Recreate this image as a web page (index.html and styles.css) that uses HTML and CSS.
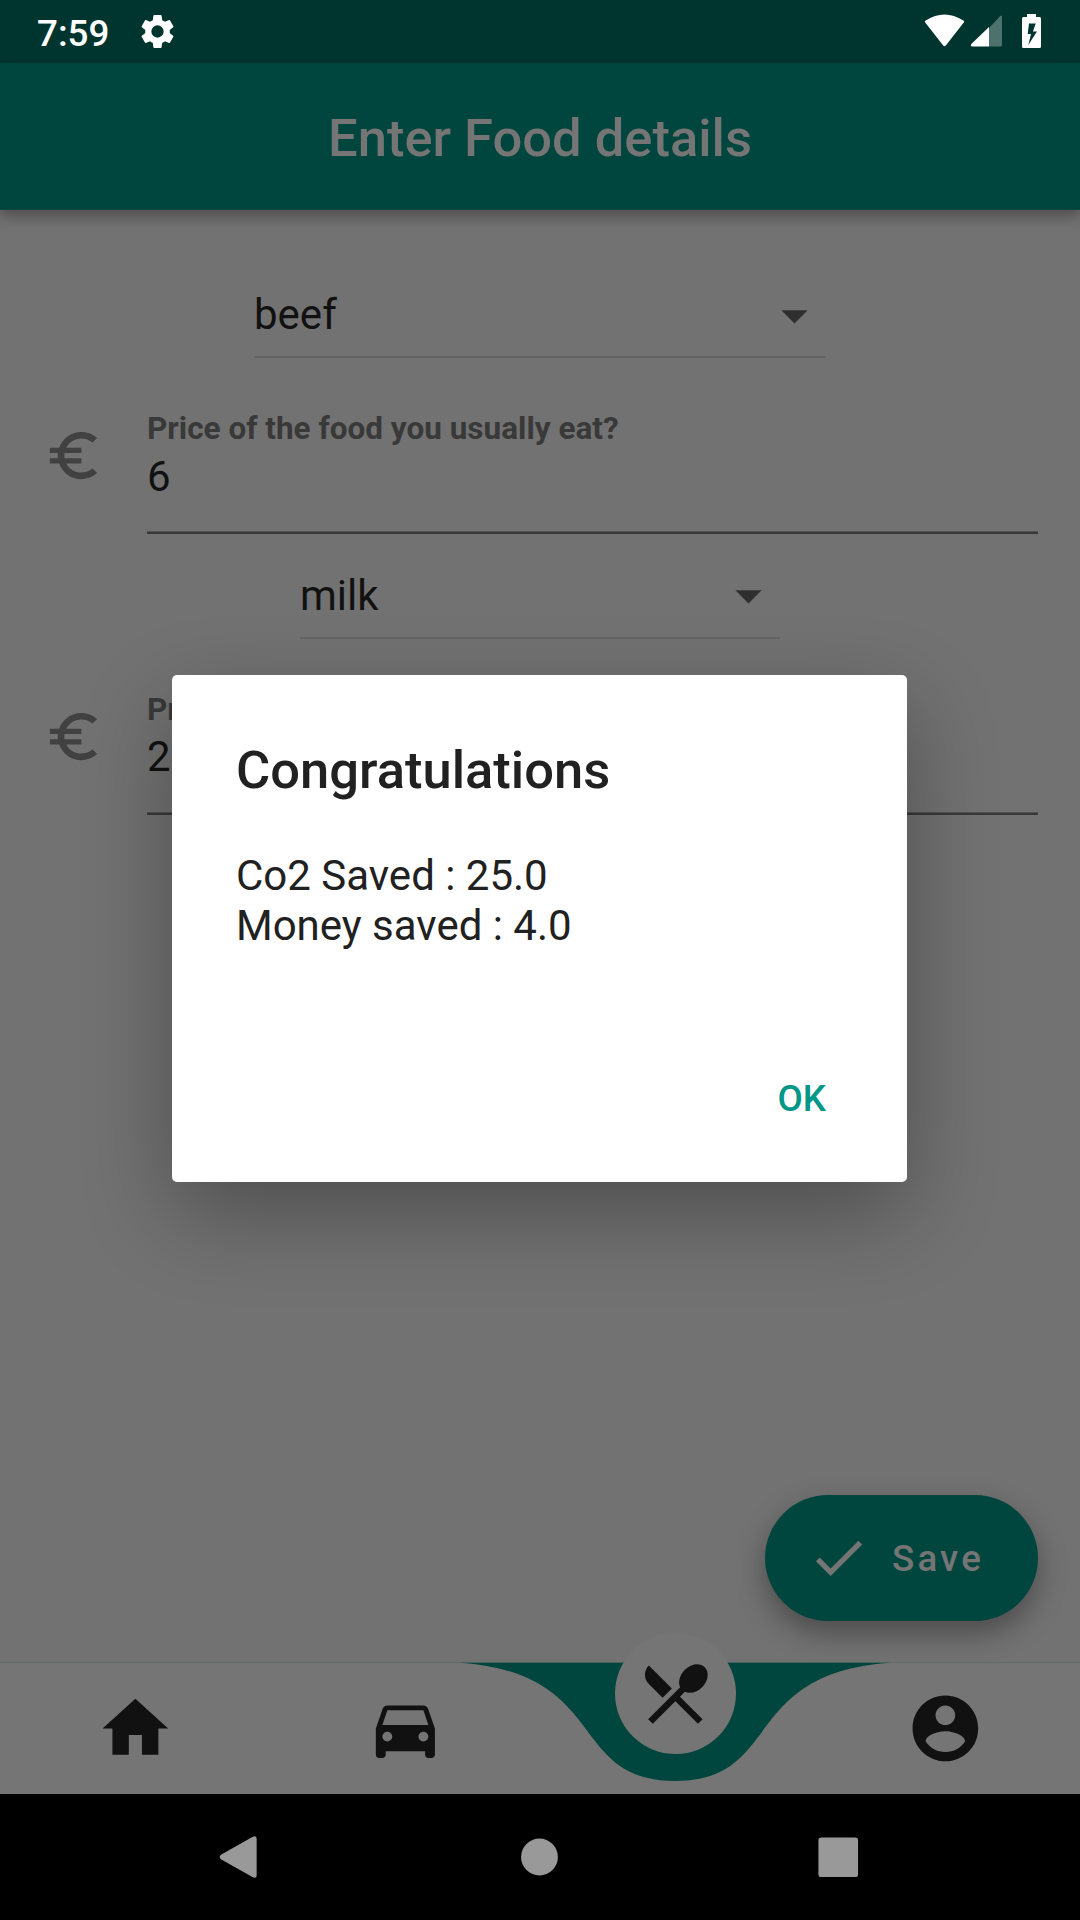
FILE: index.html
```html
<!DOCTYPE html>
<html lang="en">
<head>
<meta charset="utf-8">
<title>Enter Food details</title>
<link rel="stylesheet" href="styles.css">
</head>
<body>
<div class="screen">
  <header class="status">
    <span class="clock">7:59</span>
    <svg class="gear" viewBox="0 0 24 24"><path fill-rule="evenodd" d="M19.14 12.94c.04-.3.06-.61.06-.94s-.02-.64-.07-.94l2.03-1.58c.18-.14.23-.41.12-.61l-1.92-3.32c-.12-.22-.37-.29-.59-.22l-2.39.96c-.5-.38-1.03-.7-1.62-.94L14.4 2.81c-.04-.24-.24-.41-.48-.41h-3.84c-.24 0-.43.17-.47.41l-.36 2.54c-.59.24-1.13.57-1.62.94l-2.39-.96c-.22-.08-.47 0-.59.22L2.74 8.87c-.12.21-.08.47.12.61l2.03 1.58c-.05.3-.09.63-.09.94s.02.64.07.94l-2.03 1.58c-.18.14-.23.41-.12.61l1.92 3.32c.12.22.37.29.59.22l2.39-.96c.5.38 1.03.7 1.62.94l.36 2.54c.05.24.24.41.48.41h3.84c.24 0 .44-.17.47-.41l.36-2.54c.59-.24 1.13-.56 1.62-.94l2.39.96c.22.08.47 0 .59-.22l1.92-3.32c.12-.22.07-.47-.12-.61l-2.01-1.58zM12 15.6A3.6 3.6 0 1 1 12 8.4A3.6 3.6 0 0 1 12 15.6z"/></svg>
    <svg class="indicators" viewBox="0 0 120 36">
      <path d="M1.2 8.6Q.1 7.4 1.6 6.4Q20.5 -5.6 39.4 6.4Q40.9 7.4 39.8 8.6L22 31.3Q20.5 33 19 31.3Z"/>
      <path class="dim" d="M65 14V32.5H76.5Q78 32.5 78 31V3Q78 .5 76 2.2Z"/>
      <path d="M65 13V32.5H48.5Q46 32.3 47.3 30Z"/>
      <path fill-rule="evenodd" d="M103 0h9v3h3.5Q117 3 117 4.5V32.5Q117 34 115.5 34H99.5Q98 34 98 32.5V4.5Q98 3 99.5 3H103ZM105 9.5L103.7 20H107L104.3 31L113 17.5H109L111.7 9.5Z"/>
    </svg>
  </header>

  <div class="appbar"><h1>Enter Food details</h1></div>

  <main class="form">
    <section class="group">
      <div class="dropdown">
        <span>beef</span>
        <svg class="arrow" viewBox="0 0 24 24"><path d="M7 10l5 5 5-5z"/></svg>
      </div>
      <div class="field">
        <svg class="euro" viewBox="0 0 24 24"><path d="M15 18.5c-2.51 0-4.68-1.42-5.76-3.5H15v-2H8.58c-.05-.33-.08-.66-.08-1s.03-.67.08-1H15V9H9.24C10.32 6.92 12.5 5.5 15 5.5c1.61 0 3.09.59 4.23 1.57L21 5.3C19.41 3.87 17.3 3 15 3c-3.92 0-7.24 2.51-8.48 6H3v2h3.06c-.04.33-.06.66-.06 1s.02.67.06 1H3v2h3.52c1.24 3.49 4.56 6 8.48 6 2.31 0 4.41-.87 6-2.3l-1.78-1.77c-1.13.98-2.6 1.57-4.22 1.57z"/></svg>
        <div class="entry">
          <label>Price of the food you usually eat?</label>
          <div class="value">6</div>
        </div>
      </div>
    </section>
    <section class="group">
      <div class="dropdown narrow">
        <span>milk</span>
        <svg class="arrow" viewBox="0 0 24 24"><path d="M7 10l5 5 5-5z"/></svg>
      </div>
      <div class="field">
        <svg class="euro" viewBox="0 0 24 24"><path d="M15 18.5c-2.51 0-4.68-1.42-5.76-3.5H15v-2H8.58c-.05-.33-.08-.66-.08-1s.03-.67.08-1H15V9H9.24C10.32 6.92 12.5 5.5 15 5.5c1.61 0 3.09.59 4.23 1.57L21 5.3C19.41 3.87 17.3 3 15 3c-3.92 0-7.24 2.51-8.48 6H3v2h3.06c-.04.33-.06.66-.06 1s.02.67.06 1H3v2h3.52c1.24 3.49 4.56 6 8.48 6 2.31 0 4.41-.87 6-2.3l-1.78-1.77c-1.13.98-2.6 1.57-4.22 1.57z"/></svg>
        <div class="entry">
          <label>Price</label>
          <div class="value second">2</div>
        </div>
      </div>
    </section>
    <button class="fab">
      <svg viewBox="0 0 24 24"><path d="M9 16.17L4.83 12l-1.42 1.41L9 19 21 7l-1.41-1.41z"/></svg>
      <span>Save</span>
    </button>
  </main>

  <nav class="tabs">
    <svg class="curve" viewBox="0 0 1080 132">
      <rect class="hairline" width="1080" height="1"/>
      <path d="M459 .75C610.2 10.6 567 118.9 675 118.9S739.8 10.6 891 .75Z"/>
    </svg>
    <a class="tab"><svg viewBox="0 0 24 24"><path d="M10 20v-6h4v6h5v-8h3L12 3 2 12h3v8z"/></svg></a>
    <a class="tab"><svg viewBox="0 0 24 24"><path d="M18.92 6.01C18.72 5.42 18.16 5 17.5 5h-11c-.66 0-1.21.42-1.42 1.01L3 12v8c0 .55.45 1 1 1h1c.55 0 1-.45 1-1v-1h12v1c0 .55.45 1 1 1h1c.55 0 1-.45 1-1v-8l-2.08-5.99zM6.5 16c-.83 0-1.5-.67-1.5-1.5S5.67 13 6.5 13s1.5.67 1.5 1.5S7.33 16 6.5 16zm11 0c-.83 0-1.5-.67-1.5-1.5s.67-1.5 1.5-1.5 1.5.67 1.5 1.5-.67 1.5-1.5 1.5zM5 11l1.5-4.5h11L19 11H5z"/></svg></a>
    <a class="tab"><span class="active"><svg viewBox="0 0 24 24"><path d="M8.1 13.34l2.83-2.83L3.91 3.5c-1.56 1.56-1.56 4.09 0 5.66l4.19 4.18zm6.78-1.81c1.53.71 3.68.21 5.27-1.38 1.91-1.91 2.28-4.65.81-6.12-1.46-1.46-4.2-1.1-6.12.81-1.59 1.59-2.09 3.74-1.38 5.27L3.7 19.87l1.41 1.41L12 14.41l6.88 6.88 1.41-1.41L13.41 13l1.47-1.47z"/></svg></span></a>
    <a class="tab"><svg viewBox="0 0 24 24"><path d="M12 2C6.48 2 2 6.48 2 12s4.48 10 10 10 10-4.48 10-10S17.52 2 12 2zm0 3c1.66 0 3 1.34 3 3s-1.34 3-3 3-3-1.34-3-3 1.34-3 3-3zm0 14.2c-2.5 0-4.71-1.28-6-3.22.03-1.99 4-3.08 6-3.08 1.99 0 5.97 1.09 6 3.08-1.29 1.94-3.5 3.22-6 3.22z"/></svg></a>
  </nav>

  <footer class="sysnav">
    <svg viewBox="0 0 44 44"><path d="M36 1Q40.500 -1 40.500 3V41Q40.500 45 36 43L3.500 24.500Q0 22 3.500 19.500Z"/></svg>
    <svg viewBox="0 0 44 44"><circle cx="22.5" cy="22" r="19.3"/></svg>
    <svg viewBox="0 0 44 44"><rect x="1.5" y="1.5" width="41.5" height="41.5" rx="3"/></svg>
  </footer>

  <div class="overlay">
    <div class="dialog" role="dialog">
      <h2>Congratulations</h2>
      <p>Co2 Saved : 25.0<br>Money saved : 4.0</p>
      <div class="actions"><button>OK</button></div>
    </div>
  </div>
</div>
</body>
</html>
```
FILE: styles.css
```css
* { box-sizing: border-box; margin: 0; padding: 0; }
body { font-family: Roboto, sans-serif; color: #111; }
svg { display: block; flex: none; overflow: visible; }
button { border: 0; background: none; font: inherit; }

.screen {
  position: relative;
  display: flex;
  flex-direction: column;
  width: 1080px;
  height: 1920px;
  overflow: hidden;
  background: #727272;
}

.status {
  display: flex;
  height: 63px;
  padding: 0 36px 0 37px;
  background: #00352f;
  fill: #fff;
}
.clock { width: 99.5px; font-size: 36.75px; font-weight: 500; line-height: 68px; color: #fff; }
.gear { width: 41px; height: 41px; margin-top: 11.3px; }
.indicators { width: 120px; height: 36px; margin: 14px 0 0 auto; }
.dim { opacity: .3; }

.appbar {
  z-index: 1;
  height: 147px;
  background: #00463e;
  box-shadow: 0 6px 14px rgba(0, 0, 0, .33);
}
.appbar h1 {
  font-size: 52.5px;
  font-weight: 500;
  line-height: 150px;
  text-align: center;
  color: #757575;
}

.form { position: relative; flex: 1; padding: 42px 42px 0; font-size: 42px; }
.group { height: 281px; }
.dropdown {
  display: flex;
  align-items: center;
  justify-content: space-between;
  width: 572px;
  height: 106px;
  margin: 0 auto;
  padding-top: 22px;
  border-bottom: 2px solid #646464;
}
.dropdown span { padding-bottom: 2px; }
.narrow { width: 480px; padding-top: 21px; }
.narrow span { padding-bottom: 0; }
.arrow { width: 63px; height: 63px; fill: #2f2f2f; }
.field { display: flex; gap: 42px; height: 176px; }
.euro { width: 63px; height: 63px; margin-top: 66px; fill: #414141; }
.entry {
  flex: 1;
  padding-top: 53px;
  border-bottom: 2px solid #393939;
  box-shadow: inset 0 -1px #525252;
}
.entry label { display: block; font-size: 31.5px; font-weight: 700; line-height: 36px; color: #393939; }
.value { margin-top: 5px; line-height: 50px; }
.second { margin-top: 4px; }

.fab {
  position: absolute;
  right: 42px;
  bottom: 41.5px;
  display: flex;
  align-items: center;
  gap: 22px;
  width: 273px;
  height: 126px;
  padding-left: 42px;
  border-radius: 63px;
  background: #00463e;
  box-shadow: 0 12px 28px rgba(0, 0, 0, .34);
  fill: #757575;
  color: #757575;
  font-size: 36.75px;
  font-weight: 500;
  letter-spacing: 3.15px;
}
.fab svg { width: 63px; height: 63px; }
.fab span { padding-top: 2px; }

.tabs {
  position: relative;
  display: grid;
  grid-template-columns: repeat(4, 1fr);
  height: 132px;
  background: #757575;
}
.curve { position: absolute; inset: 0; width: 1080px; height: 132px; fill: #00463e; }
.hairline { fill: #5f6b69; }
.tab { position: relative; display: flex; justify-content: center; align-items: center; fill: #111; }
.tab svg { width: 78.75px; height: 78.75px; }
.active {
  display: flex;
  align-items: center;
  justify-content: center;
  width: 121px;
  height: 121px;
  margin-top: -69px;
  border-radius: 50%;
  background: #757575;
}

.sysnav {
  display: flex;
  justify-content: space-between;
  align-items: center;
  height: 126px;
  padding: 0 221px 0 218px;
  background: #000;
  fill: #999;
}
.sysnav svg { width: 42px; height: 42px; }

/* Modal layer covers everything between the status and system bars */
.overlay {
  position: absolute;
  inset: 63px 0 126px;
  z-index: 2;
  display: flex;
  align-items: center;
  justify-content: center;
  padding-right: 1px;
}
.dialog {
  width: 735px;
  height: 507px;
  padding: 63px 63px 0 64px;
  border-radius: 5px;
  background: #fff;
  box-shadow: 0 32px 90px -2px rgba(0, 0, 0, .32);
  color: #212121;
}
.dialog h2 { font-size: 52.5px; font-weight: 500; line-height: 64px; }
.dialog p { height: 226px; margin-top: 49px; font-size: 42px; line-height: 50px; }
.actions { display: flex; justify-content: flex-end; padding-right: 18px; }
.actions button { font-size: 36.75px; font-weight: 500; line-height: 44px; color: #009688; }
```
